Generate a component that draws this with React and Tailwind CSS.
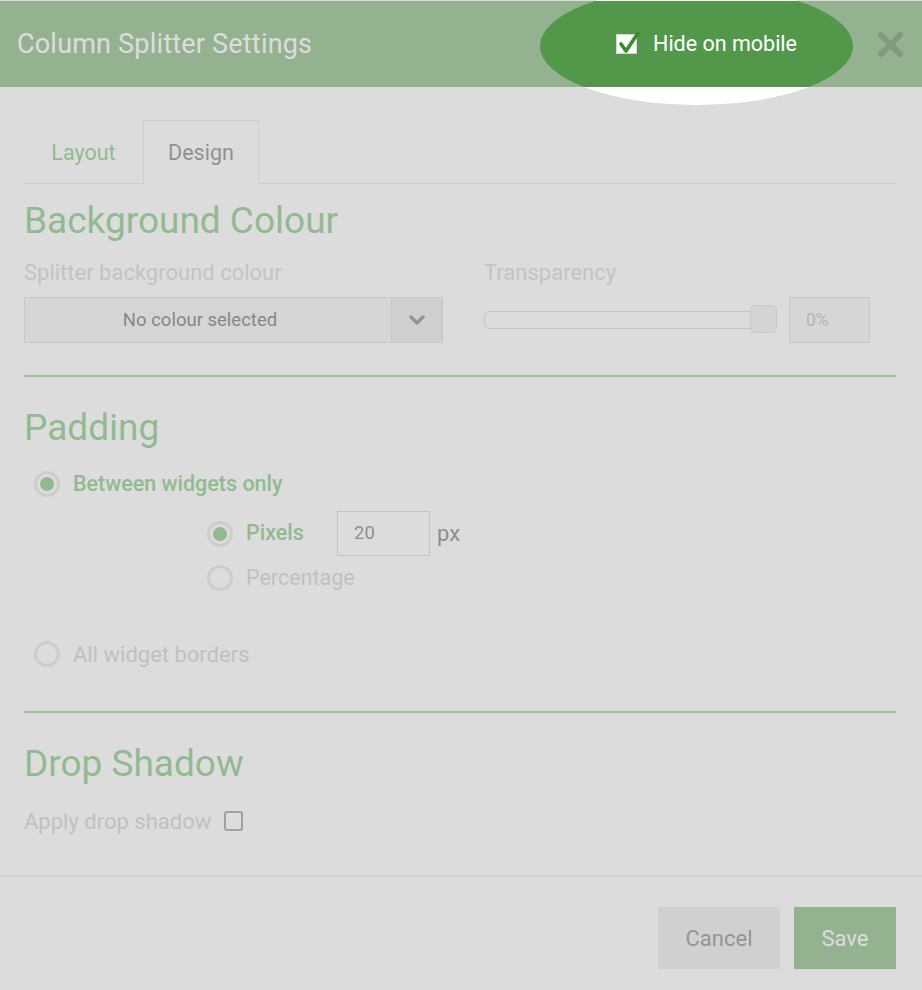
import React from 'react';

const GREEN = 'text-[#4caf4a]';

function Radio({ checked }) {
    return (
        <span className="w-[26px] h-[26px] rounded-full border-[3px] border-[#dcdcdc] bg-white flex items-center justify-center shrink-0">
            {checked && <span className="w-[14px] h-[14px] rounded-full bg-[#4caf4a]" />}
        </span>
    );
}

function SectionTitle({ children, className = '' }) {
    return <h2 className={`text-[37px] leading-[42px] font-normal ${GREEN} ${className}`}>{children}</h2>;
}

function Divider({ className = '' }) {
    return <div className={`h-[2px] bg-[#72bd6c] ${className}`} />;
}

export default function App() {
    return (
        <div className="relative w-[922px] h-[990px] overflow-hidden bg-white font-['Roboto',sans-serif]">
            {/* Header */}
            <div className="h-[87px] bg-[#53984a] border-t border-white flex items-center pl-[17px] pr-[18px]">
                <h1 className="text-[27px] tracking-[0.2px] text-white font-normal">Column Splitter Settings</h1>
                <label className="ml-auto flex items-center">
                    <span className="relative w-[21px] h-[20px] bg-white border border-[#d6d6d6]">
                        <svg className="absolute left-[1px] top-[-4px] overflow-visible" width="22" height="24" viewBox="0 0 22 24">
                            <path d="M3 13 L8 20 L20 2" fill="none" stroke="#3a8a30" strokeWidth="3.6" strokeLinecap="round" strokeLinejoin="round" />
                        </svg>
                    </span>
                    <span className="ml-[16px] text-[21.5px] text-white">Hide on mobile</span>
                </label>
                <button className="ml-[80px] w-[27px] h-[27px] flex items-center justify-center">
                    <svg width="27" height="27" viewBox="0 0 27 27">
                        <path d="M4 4 L23 23 M23 4 L4 23" stroke="#2a5d24" strokeWidth="6" strokeLinecap="round" />
                    </svg>
                </button>
            </div>

            <div className="px-[24px] pr-[26px]">
                {/* Tabs */}
                <div className="mt-[33px] flex border-b border-[#dcdcdc] h-[64px]">
                    <div className={`w-[119px] pt-[4px] flex items-center justify-center text-[21.5px] ${GREEN}`}>Layout</div>
                    <div className="w-[116px] pt-[3px] -mb-px bg-white border border-[#dcdcdc] border-b-white flex items-center justify-center text-[21.5px] text-[#4a4a4a]">
                        Design
                    </div>
                </div>

                {/* Background colour */}
                <SectionTitle className="mt-[16px]">Background Colour</SectionTitle>
                <div className="flex mt-[18px]">
                    <div className="w-[419px]">
                        <p className="text-[22px] leading-[25px] text-[#c4c4c4]">Splitter background colour</p>
                        <div className="mt-[12px] h-[46px] flex border border-[#d0d0d0] bg-[#efefef]">
                            <div className="w-[366px] pt-[2px] flex items-center justify-center pr-[16px] text-[18.5px] text-[#333]">No colour selected</div>
                            <div className="flex-1 border-l border-[#d0d0d0] bg-[#e1e1e1] flex items-center justify-center">
                                <svg width="16" height="12" viewBox="0 0 16 12">
                                    <path d="M2 3 L8 9 L14 3" fill="none" stroke="#555" strokeWidth="3.4" strokeLinecap="round" strokeLinejoin="round" />
                                </svg>
                            </div>
                        </div>
                    </div>
                    <div className="ml-[41px]">
                        <p className="text-[22px] leading-[25px] text-[#c4c4c4]">Transparency</p>
                        <div className="mt-[12px] flex items-center">
                            <div className="relative w-[293px] h-[46px] flex items-center">
                                <div className="w-[291px] h-[18px] rounded-[6px] border border-[#c4c4c4] bg-white" />
                                <div className="absolute left-[266px] top-[8px] w-[27px] h-[28px] rounded-[5px] border border-[#d0d0d0] bg-[#ececec]" />
                            </div>
                            <div className="ml-[12px] w-[81px] h-[46px] border border-[#d0d0d0] bg-[#f0f0f0] flex items-center pl-[16px] text-[17.5px] text-[#a0a0a0]">
                                0%
                            </div>
                        </div>
                    </div>
                </div>

                <Divider className="mt-[32px]" />

                {/* Padding */}
                <SectionTitle className="mt-[30px]">Padding</SectionTitle>
                <div className="mt-[20px] pl-[10px]">
                    <div className="h-[30px] flex items-center">
                        <Radio checked />
                        <span className={`ml-[13px] text-[21.5px] font-medium ${GREEN}`}>Between widgets only</span>
                    </div>
                    <div className="pl-[173px] mt-[12px]">
                        <div className="h-[45px] flex items-center">
                            <Radio checked />
                            <span className={`ml-[13px] w-[91px] text-[21.5px] font-medium ${GREEN}`}>Pixels</span>
                            <div className="w-[93px] h-[45px] border border-[#c4c4c4] bg-white flex items-center pl-[16px] text-[18.5px] text-[#444]">20</div>
                            <span className="ml-[7px] text-[22px] text-[#444]">px</span>
                        </div>
                        <div className="h-[30px] mt-[7px] flex items-center">
                            <Radio />
                            <span className="ml-[13px] text-[21.5px] text-[#bdbdbd]">Percentage</span>
                        </div>
                    </div>
                    <div className="h-[30px] mt-[46px] flex items-center">
                        <Radio />
                        <span className="ml-[13px] text-[22px] text-[#bdbdbd]">All widget borders</span>
                    </div>
                </div>

                <Divider className="mt-[42px]" />

                {/* Drop shadow */}
                <SectionTitle className="mt-[30px]">Drop Shadow</SectionTitle>
                <div className="mt-[24px] h-[24px] flex items-center">
                    <span className="text-[22px] text-[#bdbdbd]">Apply drop shadow</span>
                    <span className="ml-[13px] w-[19px] h-[20px] rounded-[3px] border-2 border-[#727272] bg-white" />
                </div>
            </div>

            {/* Footer */}
            <div className="mt-[42px] h-[2px] bg-[#e8e8e8]" />
            <div className="flex justify-end gap-[14px] pr-[26px] mt-[30px]">
                <button className="w-[122px] h-[62px] bg-[#e3e3e3] text-[22px] text-[#555]">Cancel</button>
                <button className="w-[102px] h-[62px] bg-[#53984a] text-[22px] text-white">Save</button>
            </div>

            {/* Spotlight over the mobile toggle */}
            <div className="pointer-events-none absolute left-[540px] top-[-13px] w-[313px] h-[118px] rounded-[50%] shadow-[0_0_0_2000px_rgba(194,194,194,0.58)]" />
        </div>
    );
}
